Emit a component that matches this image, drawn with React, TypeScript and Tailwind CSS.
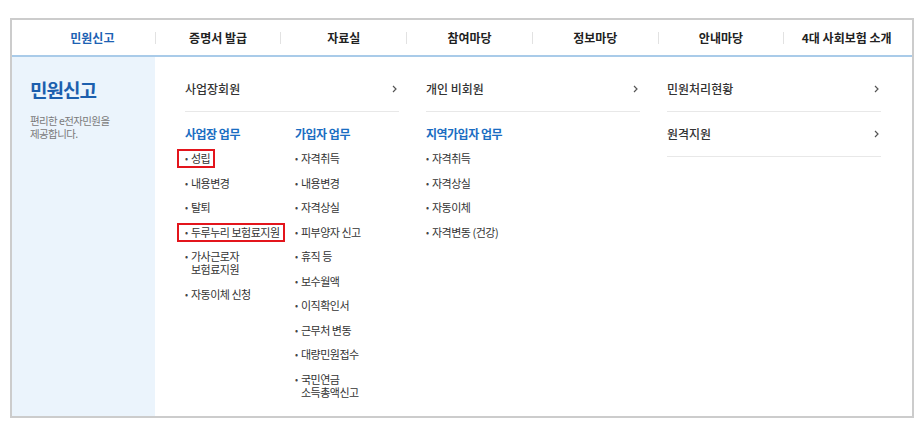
import React from "react";

const navItems = ["민원신고", "증명서 발급", "자료실", "참여마당", "정보마당", "안내마당", "4대 사회보험 소개"];

type Item = { label: string[]; boxed?: boolean };

const bizItems: Item[] = [
  { label: ["성립"], boxed: true },
  { label: ["내용변경"] },
  { label: ["탈퇴"] },
  { label: ["두루누리 보험료지원"], boxed: true },
  { label: ["가사근로자", "보험료지원"] },
  { label: ["자동이체 신청"] },
];

const memberItems: Item[] = [
  { label: ["자격취득"] },
  { label: ["내용변경"] },
  { label: ["자격상실"] },
  { label: ["피부양자 신고"] },
  { label: ["휴직 등"] },
  { label: ["보수월액"] },
  { label: ["이직확인서"] },
  { label: ["근무처 변동"] },
  { label: ["대량민원접수"] },
  { label: ["국민연금", "소득총액신고"] },
];

const regionItems: Item[] = [
  { label: ["자격취득"] },
  { label: ["자격상실"] },
  { label: ["자동이체"] },
  { label: ["자격변동 (건강)"] },
];

const Chevron = () => (
  <svg width="5" height="8" viewBox="0 0 5 8" className="mr-[2px]">
    <path d="M1 1l3 3-3 3" fill="none" stroke="#555" strokeWidth="1.2" />
  </svg>
);

const RowLink = ({ label }: { label: string }) => (
  <div className="flex items-center justify-between border-b border-[#e8e8e8] pt-[14px] pb-[14px] mr-[27px]">
    <span className="text-[12px] leading-[16px] text-[#333] font-medium">{label}</span>
    <Chevron />
  </div>
);

const ItemList = ({ title, items }: { title: string; items: Item[] }) => (
  <div className="flex flex-col">
    <div className="text-[12px] leading-[14px] font-bold text-[#1a6dc2] tracking-[-0.5px]">{title}</div>
    <ul className="flex flex-col gap-[11.5px] mt-[11px]">
      {items.map((it, i) => (
        <li key={i} className="flex">
          <div
            className={
              it.boxed
                ? "flex border-2 border-[#e3151c] -ml-[8px] pl-[6px] pr-[3px] py-[1px] -my-[3px]"
                : "flex"
            }
          >
            <span className="w-[6px] text-[9px] leading-[13px] text-[#444]">•</span>
            <span className="text-[11px] leading-[13px] text-[#333] tracking-[-0.5px]">
              {it.label.map((l, j) => (
                <div key={j}>{l}</div>
              ))}
            </span>
          </div>
        </li>
      ))}
    </ul>
  </div>
);

export default function App() {
  return (
    <div className="w-[922px] h-[426px] bg-white pt-[18px] pl-[10px] font-['Noto_Sans_CJK_KR','Noto_Sans',sans-serif]">
      <div className="w-[904px] h-[400px] border-2 border-[#cccccc] flex flex-col">
        {/* Top nav */}
        <div className="h-[37px] flex items-center pl-[18px] pr-[3px] border-b-2 border-[#a9cbe9]">
          {navItems.map((n, i) => (
            <React.Fragment key={n}>
              {i > 0 && <span className="w-px h-[12px] bg-[#e2e2e2]" />}
              <div
                className={`flex-1 text-center text-[12px] font-bold ${
                  i === 0 ? "text-[#1d62b3]" : "text-[#222]"
                }`}
              >
                {n}
              </div>
            </React.Fragment>
          ))}
        </div>

        {/* Body */}
        <div className="flex flex-1">
          <div className="w-[143px] bg-[#ebf4fc] pl-[18px] pt-[21px]">
            <div className="text-[19px] leading-[24px] font-bold text-[#1c5fae] tracking-[-1px]">민원신고</div>
            <p className="mt-[12px] text-[10.5px] leading-[13px] text-[#7a7a7a] tracking-[-0.6px]">
              편리한 e전자민원을
              <br />
              제공합니다.
            </p>
          </div>

          <div className="flex pl-[30px]">
            {/* 사업장회원 */}
            <div className="w-[241px] flex flex-col">
              <div className="pt-[10px]">
                <RowLink label="사업장회원" />
              </div>
              <div className="flex pt-[15px]">
                <div className="w-[110px]">
                  <ItemList title="사업장 업무" items={bizItems} />
                </div>
                <ItemList title="가입자 업무" items={memberItems} />
              </div>
            </div>

            {/* 개인 비회원 */}
            <div className="w-[241px] flex flex-col">
              <div className="pt-[10px]">
                <RowLink label="개인 비회원" />
              </div>
              <div className="pt-[15px]">
                <ItemList title="지역가입자 업무" items={regionItems} />
              </div>
            </div>

            {/* 기타 */}
            <div className="w-[241px] flex flex-col pt-[10px]">
              <RowLink label="민원처리현황" />
              <RowLink label="원격지원" />
            </div>
          </div>
        </div>
      </div>
    </div>
  );
}
